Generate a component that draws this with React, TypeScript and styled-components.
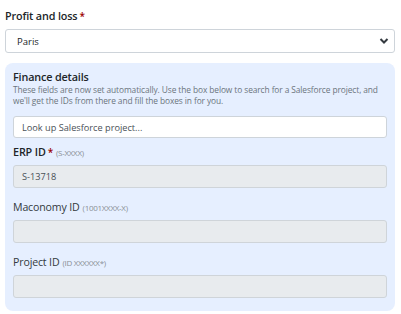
import React from "react";
import styled, { createGlobalStyle } from "styled-components";

const GlobalStyle = createGlobalStyle`
  html, body {
    margin: 0;
    padding: 0;
    background: #ffffff;
  }
  body {
    font-family: "Open Sans", "Liberation Sans", sans-serif;
    color: #212529;
  }
`;

const Page = styled.div`
  width: 401px;
  padding: 8px 6px 6px 5px;
  box-sizing: border-box;
`;

const FieldLabel = styled.label<{ $bold?: boolean }>`
  display: block;
  font-size: ${({ $bold }) => ($bold ? 10.8 : 10.6)}px;
  font-weight: ${({ $bold }) => ($bold ? 600 : 400)};
  color: ${({ $bold }) => ($bold ? "#212529" : "#343a40")};
  line-height: 16px;
  letter-spacing: -0.15px;
`;

const Star = styled.span`
  color: #9b0000;
  margin-left: 2px;
  font-size: 10px;
`;

const Hint = styled.span`
  font-size: 8px;
  font-weight: 400;
  color: #8a8f96;
  margin-left: 3px;
  letter-spacing: -0.3px;
`;

const SelectBox = styled.div`
  margin-top: 5px;
  height: 22px;
  border: 1px solid #ced4da;
  border-radius: 3px;
  display: flex;
  align-items: center;
  justify-content: space-between;
  padding: 0 5px 0 11px;
  font-size: 9.5px;
  color: #212529;
`;

const Panel = styled.section`
  margin-top: 10px;
  background: #e6efff;
  border-radius: 8px;
  padding: 7px 8px 13px 8px;
  display: flex;
  flex-direction: column;
`;

const PanelTitle = styled.h3`
  margin: 0;
  font-size: 10.8px;
  font-weight: 600;
  line-height: 14px;
  letter-spacing: -0.15px;
`;

const Description = styled.p`
  margin: 0;
  font-size: 8.4px;
  line-height: 11px;
  color: #6c757d;
  letter-spacing: -0.1px;
`;

const Input = styled.div<{ $disabled?: boolean }>`
  height: 23px;
  box-sizing: border-box;
  border: 1px solid ${({ $disabled }) => ($disabled ? "#cfd4d9" : "#ced4da")};
  background: ${({ $disabled }) => ($disabled ? "#e8ebee" : "#ffffff")};
  border-radius: 3px;
  display: flex;
  align-items: center;
  padding: 0 8px;
  font-size: 9.2px;
  color: #495057;
`;

const LookupInput = styled(Input)`
  margin-top: 10px;
  height: 22px;
`;

const Field = styled.div<{ $gap: number }>`
  margin-top: ${({ $gap }) => $gap}px;
  display: flex;
  flex-direction: column;
  gap: 4px;
`;

const Chevron = () => (
  <svg width="10" height="8" viewBox="0 0 10 8">
    <path d="M1.5 2 L5 5.5 L8.5 2" fill="none" stroke="#343a40" strokeWidth="2" />
  </svg>
);

export default function App() {
  return (
    <Page>
      <GlobalStyle />
      <FieldLabel $bold>
        Profit and loss<Star>*</Star>
      </FieldLabel>
      <SelectBox>
        <span>Paris</span>
        <Chevron />
      </SelectBox>
      <Panel>
        <PanelTitle>Finance details</PanelTitle>
        <Description>
          These fields are now set automatically. Use the box below to search for a Salesforce project, and
          we'll get the IDs from there and fill the boxes in for you.
        </Description>
        <LookupInput>Look up Salesforce project...</LookupInput>
        <Field $gap={6}>
          <FieldLabel $bold>
            ERP ID<Star>*</Star>
            <Hint>(S-XXXX)</Hint>
          </FieldLabel>
          <Input $disabled>S-13718</Input>
        </Field>
        <Field $gap={11}>
          <FieldLabel>
            Maconomy ID<Hint>(1001XXXX-X)</Hint>
          </FieldLabel>
          <Input $disabled />
        </Field>
        <Field $gap={11}>
          <FieldLabel>
            Project ID<Hint>(ID XXXXXX*)</Hint>
          </FieldLabel>
          <Input $disabled />
        </Field>
      </Panel>
    </Page>
  );
}
